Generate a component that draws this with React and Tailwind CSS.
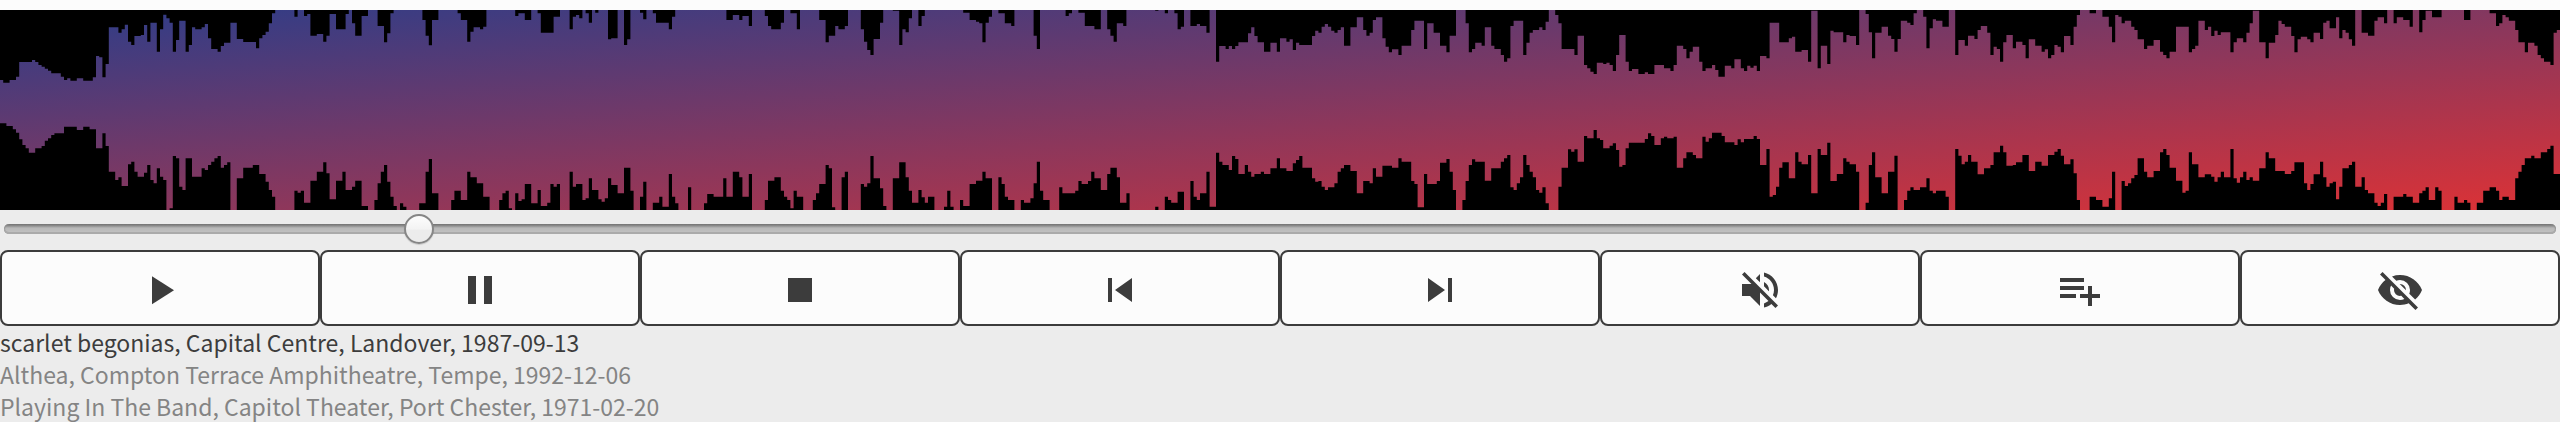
const SEGMENTS = [
  {
    offset: 0,
    top: [0,240,10,248,27,240,48,230,57,186,95,180,105,186,115,195,125,200,134,206,144,212,153,220,182,230,192,240,201,235,211,242,230,235,250,242,278,232,288,168,298,172,307,232,317,192,326,82,355,98,364,88,374,74,384,125,393,135,402,108,422,105,431,75,441,125,450,68,470,155,480,88,490,44,499,55,508,68,518,155,528,120,538,62,557,155,566,135,575,82,585,88,604,82,614,72,624,115,634,147,653,155,662,138,672,128,691,68,710,117,730,126,768,145,778,115,787,105,800,95,807,70,816,40,826,30,883,50,893,30,912,48,921,42,931,107,950,102,970,125,979,107,989,42,1008,88,1035,42,1046,30,1056,70,1066,107,1085,48,1104,30,1133,78,1152,127,1162,100,1171,40,1181,30,1267,60,1277,107,1287,136,1296,60,1315,30,1373,40,1383,60,1402,125,1411,95,1421,82,1440,88,1450,80,1459,30],
    bottom: [0,370,19,378,38,388,48,398,58,418,67,435,77,445,88,458,105,445,125,438,134,422,144,415,153,405,163,400,192,380,230,390,250,380,270,388,288,445,307,400,317,438,326,515,345,540,355,532,365,558,384,493,393,485,402,515,412,530,431,518,441,495,450,540,460,550,470,505,480,530,490,540,499,630,508,625,518,468,528,475,538,560,547,570,557,475,575,530,600,518,605,505,615,510,624,495,634,485,643,475,653,468,662,503,672,495,682,487,691,630,710,535,730,503,758,495,778,522,797,545,807,570,816,590,826,630,883,572,893,578,902,572,912,608,931,542,950,515,970,487,979,520,989,598,1008,542,1027,515,1037,570,1056,560,1066,542,1085,618,1104,630,1123,600,1133,550,1143,515,1152,495,1162,545,1171,590,1181,618,1190,630,1200,610,1210,620,1219,630,1258,610,1277,515,1287,477,1296,580,1315,630,1354,600,1363,572,1383,600,1402,515,1411,532,1430,550,1450,590,1467,630,1498,600,1508,580,1517,572,1527,630],
  },
  {
    offset: 1530,
    top: [0,30,17,48,27,40,45,60,64,30,83,40,93,98,130,50,150,30,180,88,190,50,198,45,208,55,217,30,227,40,237,68,246,30,256,38,265,30,295,118,304,115,322,30,342,135,352,118,361,30,390,38,400,58,409,30,430,40,438,68,477,88,487,50,497,30,649,60,668,45,687,60,697,48,716,78,726,30,765,48,774,78,784,88,812,68,822,30,841,40,860,88,870,30,928,60,946,127,956,107,975,78,985,88,1004,78,1014,30,1052,88,1062,125,1071,150,1081,165,1091,117,1110,68,1119,30,1148,32,1167,135,1177,88,1187,97,1196,55,1206,30,1225,78,1235,48,1244,30,1360,38,1378,60,1398,65,1408,70,1417,127,1427,68,1437,50,1446,30,1465,40,1484,70,1503,78,1513,30],
    bottom: [0,625,8,630,17,580,26,603,36,598,45,552,64,610,83,570,93,618,112,608,121,552,131,560,140,552,150,630,180,515,189,560,198,552,217,600,227,595,237,535,246,570,265,598,275,605,285,595,295,535,304,555,322,580,342,503,361,572,371,630,390,590,400,545,409,630,429,608,448,590,458,620,477,522,487,590,496,610,506,630,535,562,544,630,583,610,592,582,610,590,640,535,649,590,668,515,687,532,697,590,716,522,726,630,765,600,774,542,793,532,812,572,822,590,832,600,841,625,851,572,860,590,880,630,909,600,918,580,928,552,946,495,956,505,966,622,975,630,994,532,1004,515,1014,630,1052,552,1062,560,1071,550,1081,468,1091,535,1110,565,1119,618,1129,630,1148,535,1167,487,1187,532,1196,572,1206,608,1225,570,1235,592,1244,608,1254,590,1273,630,1302,620,1311,572,1321,620,1330,630,1350,600,1360,618,1379,552,1398,542,1417,515,1427,535,1446,630,1465,532,1475,552,1484,590,1494,600,1513,630],
  },
  {
    offset: 3060,
    top: [0,30,42,107,50,147,60,30,137,48,146,40,155,30,178,38,194,78,220,88,243,30,262,88,272,107,282,125,291,70,310,78,319,30,405,32,415,30,434,40,444,30,463,40,473,88,483,80,492,30,511,78,530,72,540,78,558,98,568,30,588,185,598,138,616,147,625,138,636,147,645,138,655,127,684,100,693,82,703,108,712,127,731,155,750,128,770,155,780,115,800,125,808,118,820,150,828,128,838,135,876,108,885,92,895,98,905,80,914,72,924,80,933,92,943,98,952,90,962,82,971,137,990,82,1008,52,1028,90,1038,107,1047,98,1062,60,1070,52,1085,115,1096,140,1105,157,1116,148,1135,165,1144,137,1172,90,1182,62,1211,147,1220,70,1240,98,1258,137,1278,157,1287,107,1306,30,1335,70,1345,157,1355,147,1365,128,1384,137,1394,82,1413,137,1423,147,1442,165,1452,185,1461,175,1471,78,1480,62,1509,165,1519,128,1528,98],
    bottom: [0,600,10,608,32,595,42,550,50,485,60,572,70,600,88,630,117,562,127,580,165,572,175,543,185,552,203,543,213,515,223,535,242,570,262,522,272,503,290,532,300,608,319,580,328,630,405,620,415,630,434,590,444,600,453,608,473,575,492,630,511,543,520,590,530,600,540,580,558,515,568,620,588,458,597,485,607,495,626,510,636,468,646,477,655,522,674,495,684,515,694,530,703,522,722,515,732,522,751,505,770,475,780,505,800,513,818,490,828,480,838,468,847,503,876,535,885,545,895,543,905,560,914,570,924,562,943,550,952,515,962,505,972,495,990,513,1009,580,1030,543,1048,550,1058,505,1067,530,1086,497,1115,503,1135,475,1145,485,1173,543,1183,552,1192,622,1211,522,1221,552,1250,543,1260,488,1278,477,1288,515,1297,570,1307,630,1326,600,1336,543,1346,495,1355,478,1365,485,1394,542,1413,505,1442,485,1452,475,1462,465,1471,562,1480,570,1490,550,1500,532,1509,465,1519,495,1528,515],
  },
  {
    offset: 4590,
    top: [0,98,10,90,28,82,38,90,48,65,57,30,77,45,86,70,95,147,134,165,143,107,162,195,172,205,182,215,192,222,201,188,220,192,230,188,240,195,250,213,260,165,268,105,287,185,297,213,306,207,325,222,345,217,355,222,373,195,402,205,421,213,431,195,440,137,460,147,470,175,480,155,490,140,508,185,518,213,527,205,546,195,556,210,566,230,584,197,604,205,613,178,632,205,642,213,651,197,661,203,671,197,681,213,690,168,710,175,719,68,748,127,777,115,786,110,796,155,815,150,834,185,844,32,862,205,872,137,892,192,901,92,911,97,940,127,950,105,960,108,979,135,988,30,1007,42,1017,97,1027,175,1036,98,1055,80,1075,107,1084,117,1094,155,1103,117,1113,62,1132,68,1142,75,1152,40,1161,30,1180,50,1190,145,1200,85,1209,58,1219,62,1238,80,1257,30,1276,165,1286,120,1305,137,1315,107,1334,117,1344,90,1353,78,1372,98,1382,165,1392,140,1401,147,1411,185,1421,127,1430,105,1449,145,1459,125,1478,135,1488,175,1497,118,1517,137],
    bottom: [0,515,10,532,20,570,29,578,38,562,48,610,58,630,86,560,96,503,115,448,124,455,134,448,144,485,163,408,173,415,192,390,201,415,211,420,220,445,240,437,250,430,259,450,268,500,278,495,288,445,297,428,345,417,355,400,364,408,374,435,393,415,402,410,412,415,431,410,441,503,460,475,470,457,489,465,499,475,518,410,528,425,537,415,547,398,575,408,585,427,614,435,623,418,633,427,643,417,672,408,681,417,690,495,710,447,719,590,729,585,738,560,748,503,758,487,777,535,796,457,806,485,815,493,834,465,844,580,863,447,873,465,892,428,902,543,921,522,940,475,950,485,960,493,979,515,988,630,1007,608,1017,495,1027,457,1036,532,1055,580,1075,515,1094,467,1103,630,1122,600,1132,572,1142,562,1151,570,1171,562,1190,535,1200,572,1209,580,1219,572,1248,590,1257,630,1277,447,1286,467,1296,493,1305,485,1315,465,1325,485,1344,523,1363,505,1382,495,1392,457,1411,437,1421,457,1430,497,1449,495,1459,487,1478,465,1497,513,1516,485],
  },
  {
    offset: 6120,
    top: [0,135,5,155,14,148,24,175,34,165,43,135,53,140,62,157,72,108,92,135,101,80,110,45,120,30,148,40,165,30,187,50,206,80,216,127,226,45,235,50,245,70,254,62,273,80,283,90,292,118,312,147,322,137,340,120,360,155,370,165,380,175,390,155,408,80,446,157,456,147,466,137,475,62,495,90,504,80,514,108,524,92,533,105,543,97,571,157,581,127,591,115,610,127,620,98,630,70,639,32,658,127,677,175,687,128,706,105,715,62,725,72,735,80,754,108,764,157,773,118,783,110,802,118,812,127,821,98,840,117,850,68,860,62,870,85,888,52,898,115,908,90,918,98,927,118,937,137,946,30,965,98,985,107,1004,62,1013,52,1032,70,1042,30,1061,70,1071,52,1090,60,1110,80,1119,30,1138,97,1148,60,1158,32,1176,52,1205,30,1272,60,1292,30,1350,40,1368,78,1378,70,1388,45,1398,52,1407,62,1426,90,1436,127,1455,157,1465,128,1484,137,1494,165,1503,175,1513,185,1532,195,1541,98,1551,90],
    bottom: [0,487,5,497,24,465,44,455,53,447,62,467,72,493,92,478,101,520,110,600,120,630,148,590,168,600,187,620,206,595,216,515,226,630,245,543,255,558,264,550,274,535,283,525,293,475,312,515,322,532,341,513,360,457,370,447,380,465,389,503,408,542,427,578,437,572,447,457,456,493,475,532,495,523,514,530,524,545,533,532,543,515,552,532,571,447,581,535,591,548,600,532,610,515,620,540,629,532,639,542,658,505,677,457,687,475,706,513,735,522,754,513,764,487,792,550,802,570,811,552,821,523,840,485,850,532,860,560,870,550,879,545,888,598,898,560,908,505,927,495,937,485,946,560,965,532,975,570,985,580,1004,608,1013,618,1023,608,1033,582,1042,630,1061,590,1090,582,1100,590,1119,608,1138,580,1148,572,1158,562,1167,600,1186,562,1196,572,1205,630,1244,590,1253,608,1272,600,1282,608,1292,630,1311,608,1330,572,1349,562,1368,572,1378,600,1388,590,1407,600,1426,535,1436,515,1445,495,1455,475,1475,467,1484,475,1503,457,1522,447,1532,437,1541,522],
  },
];

const COLUMN = 9.6;
const WIDTH = 7680;

// Joins the [x, level] steps of every segment into one outline closed along the given edge.
function outline(side, edge) {
  let d = `M0 ${edge}`;
  for (const segment of SEGMENTS) {
    const steps = segment[side];
    for (let i = 0; i < steps.length; i += 2) {
      const x = Math.round((segment.offset + steps[i]) / COLUMN) * COLUMN;
      d += `H${x.toFixed(1)}V${steps[i + 1]}`;
    }
  }
  return `${d}H${WIDTH}V${edge}Z`;
}

const CONTROLS = [
  { label: "Play", d: "M8,5.14V19.14L19,12.14L8,5.14Z" },
  { label: "Pause", d: "M14,19H18V5H14M6,19H10V5H6V19Z" },
  { label: "Stop", d: "M18,18H6V6H18V18Z" },
  { label: "Previous", d: "M6,18V6H8V18H6M9.5,12L18,6V18L9.5,12Z" },
  { label: "Next", d: "M16,18H18V6H16M6,18L14.5,12L6,6V18Z" },
  {
    label: "Mute",
    d: "M12,4L9.91,6.09L12,8.18M4.27,3L3,4.27L7.73,9H3V15H7L12,20V13.27L16.25,17.53C15.58,18.04 14.83,18.46 14,18.7V20.77C15.38,20.45 16.63,19.82 17.68,18.96L19.73,21L21,19.73L12,10.73M19,12C19,12.94 18.8,13.82 18.46,14.64L19.97,16.15C20.62,14.91 21,13.5 21,12C21,7.72 18,4.14 14,3.23V5.29C16.89,6.15 19,8.83 19,12M16.5,12C16.5,10.23 15.5,8.71 14,7.97V10.18L16.45,12.63C16.5,12.43 16.5,12.21 16.5,12Z",
  },
  {
    label: "Add to playlist",
    d: "M2,16H10V14H2M18,14V10H16V14H12V16H16V20H18V16H22V14M14,6H2V8H14M14,10H2V12H14V10Z",
  },
  {
    label: "Hide",
    d: "M11.83,9L15,12.16C15,12.11 15,12.05 15,12A3,3 0 0,0 12,9C11.94,9 11.89,9 11.83,9M7.53,9.8L9.08,11.35C9.03,11.56 9,11.77 9,12A3,3 0 0,0 12,15C12.22,15 12.44,14.97 12.65,14.92L14.2,16.47C13.53,16.8 12.79,17 12,17A5,5 0 0,1 7,12C7,11.21 7.2,10.47 7.53,9.8M2,4.27L4.28,6.55L4.73,7C3.08,8.3 1.78,10 1,12C2.73,16.39 7,19.5 12,19.5C13.55,19.5 15.03,19.2 16.38,18.66L16.81,19.08L19.73,22L21,20.73L3.27,3M12,7A5,5 0 0,1 17,12C17,12.64 16.87,13.26 16.64,13.82L19.57,16.75C21.07,15.5 22.27,13.86 23,12C21.27,7.61 17,4.5 12,4.5C10.6,4.5 9.26,4.75 8,5.2L10.17,7.35C10.74,7.13 11.35,7 12,7Z",
  },
];

const TRACKS = [
  "scarlet begonias, Capital Centre, Landover, 1987-09-13",
  "Althea, Compton Terrace Amphitheatre, Tempe, 1992-12-06",
  "Playing In The Band, Capitol Theater, Port Chester, 1971-02-20",
];

function Waveform() {
  return (
    <div className="h-[200px] w-full bg-linear-to-br/srgb from-[#2e3d88] to-[#dc3236]">
      <svg className="block h-full w-full" viewBox="0 30 7680 600" preserveAspectRatio="none" fill="#000">
        <path d={outline("top", 30)} />
        <path d={outline("bottom", 630)} />
      </svg>
    </div>
  );
}

function SeekBar() {
  return (
    <div className="flex h-10 items-center px-1">
      <div className="relative mb-0.5 h-2.5 w-full rounded-[5px] bg-linear-to-b from-[#6c6c6c] via-[#b8b8b8] via-40% to-[#c4c4c4] shadow-[inset_0_-2px_0_#aaaaaa,inset_1px_0_1px_#909090,inset_-1px_0_1px_#909090]">
        <div className="absolute -top-2.5 left-[400px] size-[30px] rounded-full border-2 border-[#868686] bg-linear-to-b from-[#fbfbfb] from-10% via-[#f3f3f3] via-50% to-[#ececec] to-55% shadow-[0_1px_1px_rgba(0,0,0,0.15)]" />
      </div>
    </div>
  );
}

export default function App() {
  return (
    <div className="w-full bg-[#ececec] text-[#3c3c3c]">
      <div className="h-2.5 bg-[#fcfcfc]" />
      <Waveform />
      <SeekBar />
      <div className="grid grid-cols-8">
        {CONTROLS.map(({ label, d }) => (
          <button
            key={label}
            aria-label={label}
            className="flex h-[76px] items-center justify-center rounded-lg border-2 border-[#3c3c3c] bg-[#fcfcfc] pt-1"
          >
            <svg className="size-12" viewBox="0 0 24 24" fill="currentColor">
              <path d={d} />
            </svg>
          </button>
        ))}
      </div>
      <ul className="h-24 overflow-hidden font-['Noto_Sans_CJK_SC',sans-serif] text-[23px] leading-8">
        {TRACKS.map((track, index) => (
          <li key={track} className={index === 0 ? "whitespace-nowrap" : "whitespace-nowrap text-[#848484]"}>
            {track}
          </li>
        ))}
      </ul>
    </div>
  );
}
